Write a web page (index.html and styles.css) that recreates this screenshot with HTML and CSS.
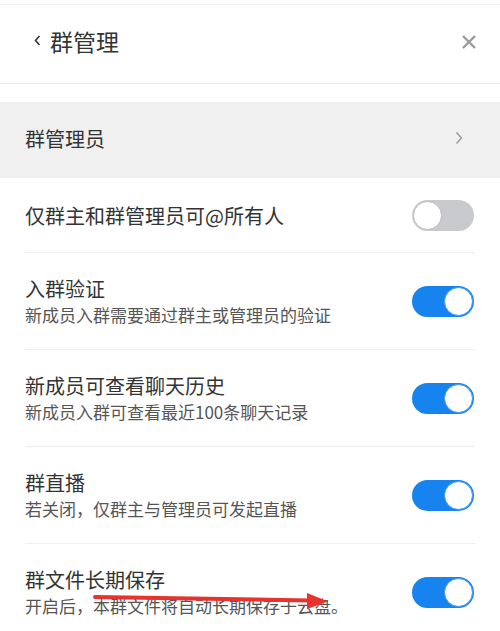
FILE: index.html
```html
<!DOCTYPE html>
<html lang="zh-CN">
<head>
    <meta charset="UTF-8">
    <meta name="viewport" content="width=device-width, initial-scale=1.0">
    <title>群管理</title>
    <link rel="stylesheet" href="styles.css">
</head>
<body>
    <div class="page">
        <div class="header">
            <div class="back">
                <svg class="back-icon" width="9" height="13" viewBox="0 0 9 13">
                    <path d="M6.5 2 L2.5 6.5 L6.5 11" fill="none" stroke="#333" stroke-width="1.6"/>
                </svg>
                <span class="title">群管理</span>
            </div>
            <svg class="close" width="16" height="16" viewBox="0 0 16 16">
                <path d="M2 2 L14 14 M14 2 L2 14" stroke="#9a9a9a" stroke-width="2.4"/>
            </svg>
        </div>

        <div class="link-row">
            <span class="item-title">群管理员</span>
            <svg width="8" height="14" viewBox="0 0 8 14">
                <path d="M1.5 1.5 L6.5 7 L1.5 12.5" fill="none" stroke="#9a9a9a" stroke-width="1.4"/>
            </svg>
        </div>

        <div class="list">
            <div class="item single">
                <div class="text">
                    <div class="item-title">仅群主和群管理员可@所有人</div>
                </div>
                <div class="switch"><span class="knob"></span></div>
            </div>
            <div class="item">
                <div class="text">
                    <div class="item-title">入群验证</div>
                    <div class="item-desc">新成员入群需要通过群主或管理员的验证</div>
                </div>
                <div class="switch on"><span class="knob"></span></div>
            </div>
            <div class="item">
                <div class="text">
                    <div class="item-title">新成员可查看聊天历史</div>
                    <div class="item-desc">新成员入群可查看最近100条聊天记录</div>
                </div>
                <div class="switch on"><span class="knob"></span></div>
            </div>
            <div class="item">
                <div class="text">
                    <div class="item-title">群直播</div>
                    <div class="item-desc">若关闭，仅群主与管理员可发起直播</div>
                </div>
                <div class="switch on"><span class="knob"></span></div>
            </div>
            <div class="item">
                <div class="text">
                    <div class="item-title">群文件长期保存</div>
                    <div class="item-desc">开启后，本群文件将自动长期保存于云盘。</div>
                </div>
                <div class="switch on"><span class="knob"></span></div>
            </div>
        </div>

        <!-- annotation arrow drawn over the screenshot -->
        <svg class="arrow" width="500" height="631" viewBox="0 0 500 631">
            <path d="M95 597 L310 600.5" stroke="#e8322e" stroke-width="4" stroke-linecap="round"/>
            <path d="M307 593 L328 601.5 L307 609 Z" fill="#e8322e"/>
        </svg>
    </div>
</body>
</html>
```

FILE: styles.css
```css
body {
    margin: 0;
    background: #fff;
    font-family: "Noto Sans CJK SC", "Noto Sans", sans-serif;
    color: #333;
}
.page {
    position: relative;
    width: 500px;
    height: 631px;
    overflow: hidden;
    border-top: 1px solid #f2f2f2;
    box-sizing: border-box;
    margin-top: 4px;
}
.header {
    height: 78px;
    display: flex;
    align-items: center;
    justify-content: space-between;
    padding: 0 23px 0 33px;
    border-bottom: 1px solid #ececec;
}
.back {
    display: flex;
    align-items: center;
    gap: 8px;
    margin-top: -7px;
}
.title {
    font-size: 23px;
    color: #333;
}
.close {
    margin-top: -4px;
}
.link-row {
    margin-top: 18px;
    height: 76px;
    background: #f0f0f0;
    display: flex;
    align-items: center;
    justify-content: space-between;
    padding: 0 37px 4px 25px;
    box-sizing: border-box;
}
.list {
    padding: 0 25px;
}
.item {
    height: 96px;
    display: flex;
    align-items: center;
    justify-content: space-between;
    border-bottom: 1px solid #eeeeee;
}
.item.single {
    height: 74px;
}
.item-title {
    font-size: 20px;
    color: #333;
    line-height: 27px;
}
.item-desc {
    font-size: 17px;
    color: #555;
    line-height: 25px;
}
.switch {
    position: relative;
    width: 62px;
    height: 31px;
    border-radius: 16px;
    background: #c9cacd;
    margin-right: 1px;
}
.switch .knob {
    position: absolute;
    top: 1px;
    left: 1px;
    width: 27px;
    height: 27px;
    border-radius: 50%;
    background: #fff;
    border: 1px solid #bdbdbd;
}
.switch.on {
    background: #1683ee;
}
.switch.on .knob {
    left: auto;
    right: 1px;
    border-color: #3d95ee;
}
.arrow {
    position: absolute;
    top: -5px;
    left: 0;
    pointer-events: none;
}
```
